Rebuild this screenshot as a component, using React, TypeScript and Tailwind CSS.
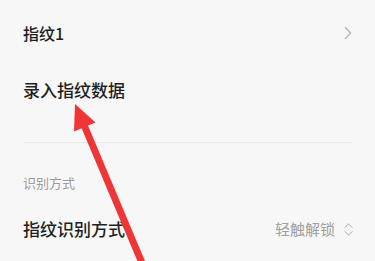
import { ChevronRight, ChevronsUpDown } from 'lucide-react'

const FONT = { fontFamily: '"Noto Sans CJK SC", "Noto Sans", sans-serif' }

export default function App() {
  return (
    <div className="relative h-[261px] w-[375px] overflow-hidden bg-[#f7f7f7]" style={FONT}>
      <div className="px-[23px]">
        <div className="flex h-[62px] items-center justify-between pt-[4px]">
          <span className="text-[16px] font-medium text-[#1f1f1f]">指纹1</span>
          <ChevronRight className="mr-[-7px] h-[22px] w-[22px] text-[#b0b0b0]" strokeWidth={1.3} />
        </div>
        <div className="flex h-[56px] items-center">
          <span className="text-[17px] font-medium text-[#1f1f1f]">录入指纹数据</span>
        </div>
        <div className="mt-[24px] h-px bg-[#ebebeb]" />
        <div className="flex h-[54px] items-end pb-[5px]">
          <span className="text-[13px] text-[#9a9a9a]">识别方式</span>
        </div>
        <div className="flex h-[64px] items-center justify-between">
          <span className="text-[17px] font-medium text-[#1f1f1f]">指纹识别方式</span>
          <div className="flex items-center gap-[5px]">
            <span className="text-[15px] text-[#a0a0a0]">轻触解锁</span>
            <ChevronsUpDown className="mr-[-5px] h-[17px] w-[17px] text-[#a8a8a8]" strokeWidth={1.4} />
          </div>
        </div>
      </div>
      <svg className="pointer-events-none absolute inset-0" width="375" height="261" viewBox="0 0 375 261">
        <line x1="84" y1="125" x2="150" y2="282" stroke="#ef3535" strokeWidth="7" />
        <polygon points="75,104 95.5,122.5 74,131.5" fill="#ef3535" />
      </svg>
    </div>
  )
}
